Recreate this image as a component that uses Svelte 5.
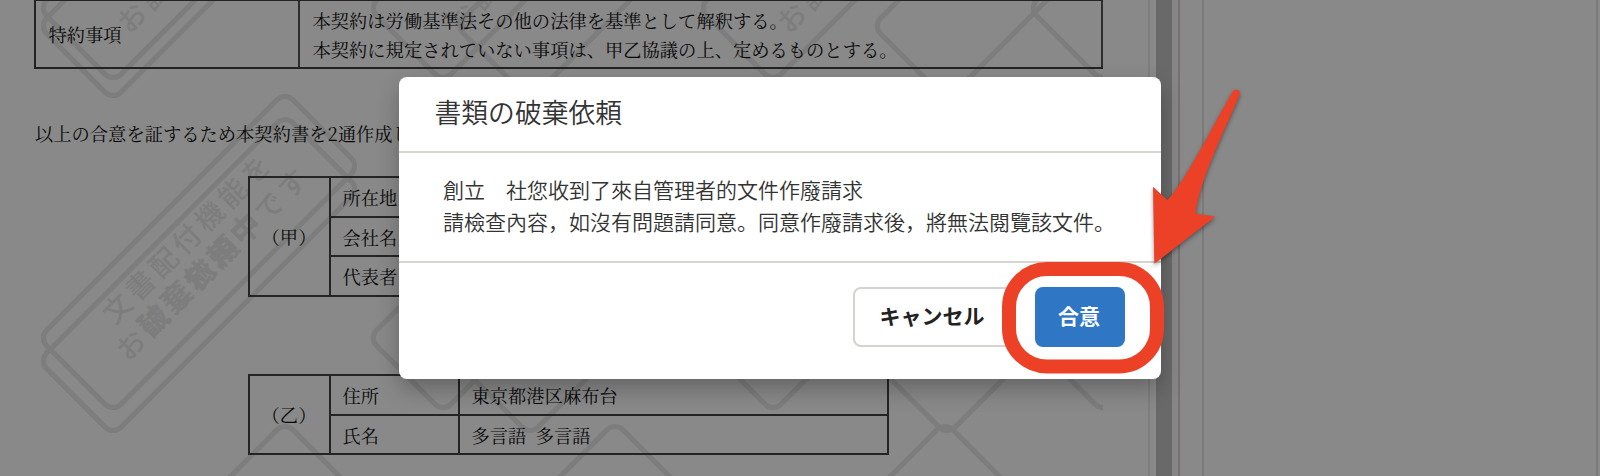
<script>
  const clauses = [
    '本契約は労働基準法その他の法律を基準として解釈する。',
    '本契約に規定されていない事項は、甲乙協議の上、定めるものとする。'
  ];
  const columns = [199, 529, 859, 1189];
  const discardColumns = [199, 616, 1033];
  const outlines = [-78, 252, 582].flatMap((y) => columns.map((x) => ({ x, y })));
  const discardOutlines = [-60, 275].flatMap((y) => discardColumns.map((x) => ({ x, y })));
</script>

<div class="screen">
  <svg class="watermark" width="1103" height="476" viewBox="0 0 1103 476" aria-hidden="true">
    {#each outlines as s}
      <rect x="-174" y="-52.5" width="348" height="105" rx="11" transform="translate({s.x} {s.y}) rotate(-45)" />
    {/each}
    {#each discardOutlines as s}
      <rect x="-174" y="-52.5" width="348" height="105" rx="11" transform="translate({s.x} {s.y}) rotate(-45)" />
    {/each}
    {#each [132, 462, 792] as x}
      <text class="trial start" transform="translate({x} 18) rotate(-45)" x="-14" y="10">お試</text>
    {/each}
    <g transform="translate(199 252) rotate(-45)">
      <text class="trial" x="2.5" y="-7.5">文書配付機能を</text>
      <text class="trial" x="2.5" y="28">お試し利用中です</text>
    </g>
    <g transform="translate(199 275) rotate(-45)">
      <text class="discard" x="2" y="11">破棄依頼中</text>
    </g>
  </svg>

  <div class="layout">
    <main class="document">
      <div class="terms">
        <div class="cell">特約事項</div>
        <div class="cell clauses">
          {#each clauses as line}<p>{line}</p>{/each}
        </div>
      </div>
      <p class="closing">以上の合意を証するため本契約書を2通作成し</p>
      <div class="party employer">
        <div class="cell side">（甲）</div>
        <div class="cell">所在地</div><div class="cell"></div>
        <div class="cell">会社名</div><div class="cell"></div>
        <div class="cell">代表者</div><div class="cell"></div>
      </div>
      <div class="party employee">
        <div class="cell side">（乙）</div>
        <div class="cell">住所</div><div class="cell">東京都港区麻布台</div>
        <div class="cell">氏名</div><div class="cell">多言語&nbsp; 多言語</div>
      </div>
    </main>
    <div class="scrollbar"></div>
    <div class="gutter"></div>
    <aside class="panel"></aside>
  </div>

  <section class="modal" role="dialog" aria-labelledby="title">
    <header><h1 id="title">書類の破棄依頼</h1></header>
    <div class="body">
      <p>創立　社您收到了來自管理者的文件作廢請求</p>
      <p>請檢查內容，如沒有問題請同意。同意作廢請求後，將無法閱覽該文件。</p>
    </div>
    <footer>
      <button class="cancel">キャンセル</button>
      <button class="agree">合意</button>
    </footer>
  </section>

  <svg class="callout" width="260" height="310" viewBox="990 76 260 310" aria-hidden="true">
    <rect x="1009" y="269" width="148" height="97.5" rx="38" fill="none" stroke="#ec4127" stroke-width="14" />
    <path d="M1232.7 91.6C1234.5 88.4 1241.3 89.2 1239.8 94.2C1230 119 1198 182 1195.7 213.8L1215.4 216.6L1154.3 263.8L1153 186.7L1167.3 200C1182 187 1213 126 1232.7 91.6Z" fill="#ec4127" />
  </svg>
</div>

<style>
  :global(body) { margin: 0; }
  .screen {
    position: relative;
    width: 1600px;
    height: 476px;
    overflow: hidden;
    background: #898989;
    font-family: "Noto Sans CJK JP", sans-serif;
  }
  p, h1 { margin: 0; font-weight: 400; }
  .watermark { position: absolute; inset: 0 auto auto 0; }
  .watermark rect { fill: none; stroke: #7d7d7d; stroke-width: 5; }
  .watermark text { fill: #7d7d7d; text-anchor: middle; font-weight: 500; }
  .trial { font-size: 28px; letter-spacing: 4.6px; }
  .watermark .start { text-anchor: start; }
  .watermark .discard { font-size: 30px; font-weight: 700; letter-spacing: 2.4px; }

  .layout { position: relative; display: flex; height: 476px; }
  .document {
    box-sizing: border-box;
    width: 1150px;
    padding-left: 34px;
    border-right: 2px solid #7d7d7d;
    color: #080808;
    font-family: "Noto Serif CJK JP", "Noto Sans CJK JP", serif;
    font-size: 18.3px;
    line-height: 29px;
    white-space: nowrap;
  }
  .terms {
    display: grid;
    grid-template-columns: 264px 803px;
    width: 1067px;
    height: 66px;
    border: 2px solid #242224;
    border-width: 2px 0 2px 2px;
    margin-top: -1px;
  }
  .terms .cell { display: flex; align-items: center; padding-left: 12.5px; border-right: 2px solid #2d2d2d; }
  .terms .clauses { flex-direction: column; align-items: flex-start; justify-content: center; padding-top: 1px; }
  .closing { margin-top: 50px; padding-left: 1px; }
  .party {
    display: grid;
    grid-template-columns: 81px 129px 429px;
    width: 639px;
    margin-left: 213.5px;
    border: solid #242424;
    border-width: 2px 0 0 2px;
  }
  .party .cell {
    display: flex;
    align-items: center;
    height: 35.6px;
    padding: 2px 0 0 12px;
    border: solid #242424;
    border-width: 0 2px 2px 0;
  }
  .party .side { justify-content: center; height: auto; padding: 0; }
  .employer { margin-top: 28px; }
  .employer .side { grid-row: span 3; }
  .employee { margin-top: 77.2px; }
  .employee .side { grid-row: span 2; }
  .scrollbar { width: 16px; margin-left: 6px; background: #696969; }
  .gutter {
    box-sizing: border-box;
    width: 8px;
    border: solid #777072;
    border-width: 0 2px 0 0;
    background: #868686;
  }
  .panel {
    box-sizing: border-box;
    width: 396px;
    margin-left: 22px;
    border: solid #7b7979;
    border-width: 0 2px;
  }

  .modal {
    position: absolute;
    left: 399px;
    top: 76.5px;
    width: 762px;
    height: 302px;
    border-radius: 8px;
    overflow: hidden;
    background: #fff;
    color: #333;
    box-shadow: 0 10px 22px rgba(0, 0, 0, 0.26);
  }
  header {
    display: flex;
    align-items: center;
    box-sizing: border-box;
    height: 76px;
    padding: 0 35.5px 3px;
    border-bottom: 2px solid #d6d6d3;
  }
  h1 { font-size: 26.8px; font-weight: 350; line-height: 40px; }
  .body {
    box-sizing: border-box;
    height: 110px;
    padding: 20px 44px 0;
    border-bottom: 2px solid #d6d6d0;
    font-size: 21px;
    line-height: 32px;
    white-space: nowrap;
  }
  .body p { font-weight: 350; }
  footer { display: flex; justify-content: flex-end; gap: 22px; padding: 24px 36px; }
  button {
    box-sizing: border-box;
    height: 60px;
    padding: 0 2px 4px 0;
    border-radius: 8px;
    font: 700 21px "Noto Sans CJK JP", sans-serif;
  }
  .cancel { width: 160px; border: 2px solid #d4d4cf; background: #fff; color: #222; }
  .agree { width: 90px; border: 0; background: #2f77c4; color: #fff; }
  .callout { position: absolute; left: 990px; top: 76px; }
  .callout path { filter: drop-shadow(0 2px 2px rgba(0, 0, 0, 0.4)); }
</style>
